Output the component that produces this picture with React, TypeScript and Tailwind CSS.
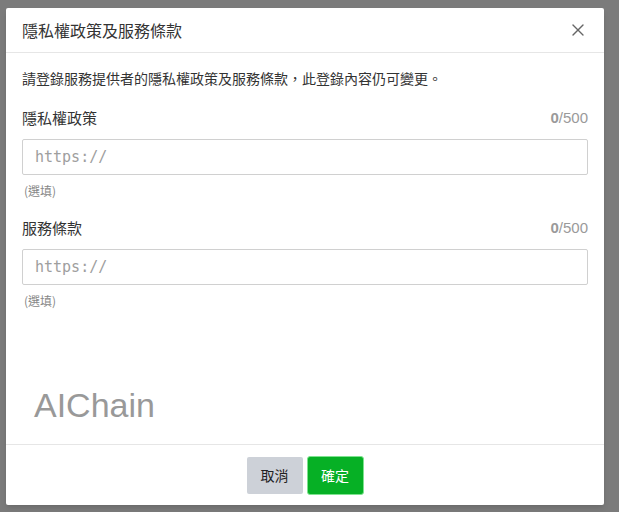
import { X } from "lucide-react";

const FONT = { fontFamily: '"Noto Sans CJK TC", "Noto Sans", sans-serif' };

function UrlField({ label }: { label: string }) {
  return (
    <div className="flex flex-col">
      <div className="flex h-[20px] items-center justify-between">
        <span className="text-[15px] text-[#333]">{label}</span>
        <span className="text-[15px] text-[#9a9a9a]" style={{ fontFamily: '"Liberation Sans", sans-serif' }}>
          <b className="font-bold">0</b>/500
        </span>
      </div>
      <div className="mt-[11px] flex h-[36px] items-center rounded-[2px] border border-[#d0d0d0] px-[12px]">
        <span className="text-[15px] text-[#9e9e9e]" style={{ fontFamily: '"DejaVu Sans Mono", monospace' }}>
          https://
        </span>
      </div>
      <span className="mt-[7px] pl-[2px] text-[12px] leading-[18px] text-[#888]">(選填)</span>
    </div>
  );
}

export default function App() {
  return (
    <div className="h-[512px] w-[619px] overflow-hidden bg-[#7b7b7b] pt-[8px] pl-[6px]" style={FONT}>
      <div className="flex h-[497px] w-[598px] flex-col rounded-[2px] bg-white shadow-md">
        <div className="flex h-[45px] shrink-0 items-center justify-between border-b border-[#e6e6e6] pl-[16px] pr-[16px]">
          <span className="text-[16px] text-[#333]">隱私權政策及服務條款</span>
          <X size={20} strokeWidth={1.6} className="text-[#666]" />
        </div>
        <div className="flex flex-1 flex-col px-[16px]">
          <p className="mt-[15px] text-[14px] leading-[20px] text-[#333]">
            請登錄服務提供者的隱私權政策及服務條款，此登錄內容仍可變更。
          </p>
          <div className="mt-[20px]">
            <UrlField label="隱私權政策" />
          </div>
          <div className="mt-[18px]">
            <UrlField label="服務條款" />
          </div>
          <div
            className="mt-[75px] pl-[12px] text-[34px] font-light leading-[40px] text-[#999]"
            style={{ fontFamily: '"Liberation Sans", Arial, sans-serif' }}
          >
            AIChain
          </div>
        </div>
        <div className="flex h-[61px] shrink-0 items-center justify-center gap-[4px] border-t border-[#e6e6e6] pt-[1px]">
          <button className="h-[37px] w-[56px] rounded-[2px] bg-[#cdd1d8] text-[14px] text-[#222]">取消</button>
          <button className="h-[39px] w-[57px] rounded-[3px] border border-[#7ee38f] bg-[#06b025] text-[14px] text-white">
            確定
          </button>
        </div>
      </div>
    </div>
  );
}
